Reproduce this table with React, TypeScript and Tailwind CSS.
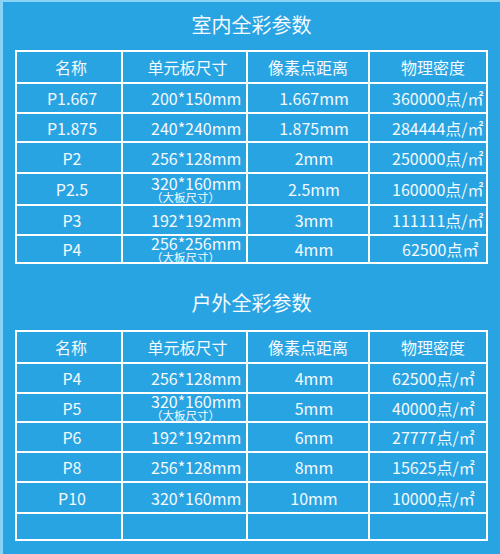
import React from "react";

type Row = {
  a: string;
  b: string;
  c: string;
  d: string;
  h: string;
  sub?: boolean;
  dcls?: string;
};

const rows1: Row[] = [
  { a: "P1.667", b: "200*150mm", c: "1.667mm", d: "360000点/㎡", h: "h-[30px]" },
  { a: "P1.875", b: "240*240mm", c: "1.875mm", d: "284444点/㎡", h: "h-[29px]" },
  { a: "P2", b: "256*128mm", c: "2mm", d: "250000点/㎡", h: "h-[31px]" },
  { a: "P2.5", b: "320*160mm", c: "2.5mm", d: "160000点/㎡", h: "h-[32px]", sub: true },
  { a: "P3", b: "192*192mm", c: "3mm", d: "111111点/㎡", h: "h-[30px]" },
  { a: "P4", b: "256*256mm", c: "4mm", d: "62500点㎡", h: "h-[28px]", sub: true, dcls: "pl-[32px]" },
];

const rows2: Row[] = [
  { a: "P4", b: "256*128mm", c: "4mm", d: "62500点/㎡", h: "h-[30px]" },
  { a: "P5", b: "320*160mm", c: "5mm", d: "40000点/㎡", h: "h-[29px]", sub: true },
  { a: "P6", b: "192*192mm", c: "6mm", d: "27777点/㎡", h: "h-[30px]" },
  { a: "P8", b: "256*128mm", c: "8mm", d: "15625点/㎡", h: "h-[30px]" },
  { a: "P10", b: "320*160mm", c: "10mm", d: "10000点/㎡", h: "h-[31px]" },
  { a: "", b: "", c: "", d: "", h: "h-[27px]" },
];

function Header() {
  return (
    <div className="flex h-[30px] items-center">
      <div className="flex h-full w-[104px] items-center justify-center pl-[4px]">名称</div>
      <div className="flex h-full w-[125px] items-center justify-center border-l-2 border-white pl-[6px]">单元板尺寸</div>
      <div className="flex h-full w-[122px] items-center justify-center border-l-2 border-white">像素点距离</div>
      <div className="flex h-full w-[118px] items-center justify-center border-l-2 border-white pl-[10px]">物理密度</div>
    </div>
  );
}

function DataRow({ r }: { r: Row }) {
  return (
    <div className={`flex border-t-2 border-white ${r.h}`}>
      <div className="flex h-full w-[104px] items-center justify-center pl-[6px]">{r.a}</div>
      <div className="flex h-full w-[125px] items-center border-l-2 border-white pl-[28px] whitespace-nowrap">
        {r.sub ? (
          <div className="flex flex-col items-start">
            <span className="leading-[15px]">{r.b}</span>
            <span className="text-[11.5px] leading-[12px]">（大板尺寸）</span>
          </div>
        ) : (
          <span>{r.b}</span>
        )}
      </div>
      <div className="flex h-full w-[122px] items-center justify-center border-l-2 border-white pl-[12px]">{r.c}</div>
      <div className={`flex h-full w-[118px] items-center border-l-2 border-white whitespace-nowrap ${r.dcls ?? "pl-[22px]"}`}>{r.d}</div>
    </div>
  );
}

function Table({ rows }: { rows: Row[] }) {
  return (
    <div className="w-[473px] border-2 border-white text-[16px] leading-none">
      <Header />
      {rows.map((r, i) => (
        <DataRow key={i} r={r} />
      ))}
    </div>
  );
}

export default function App() {
  return (
    <div
      className="h-[554px] w-[500px] overflow-hidden border-l-[3px] border-t-[2px] border-[#88d3f6] bg-[#29a4e2] pl-[12px] text-[#f4faff]"
      style={{ fontFamily: '"Noto Sans CJK SC", "Noto Sans", sans-serif' }}
    >
      <div className="flex h-[48px] w-[473px] items-start justify-center pt-[9px]">
        <span className="text-[20px] leading-[28px]">室内全彩参数</span>
      </div>
      <Table rows={rows1} />
      <div className="flex h-[66px] w-[473px] items-start justify-center pt-[25px]">
        <span className="text-[20px] leading-[28px]">户外全彩参数</span>
      </div>
      <Table rows={rows2} />
    </div>
  );
}
